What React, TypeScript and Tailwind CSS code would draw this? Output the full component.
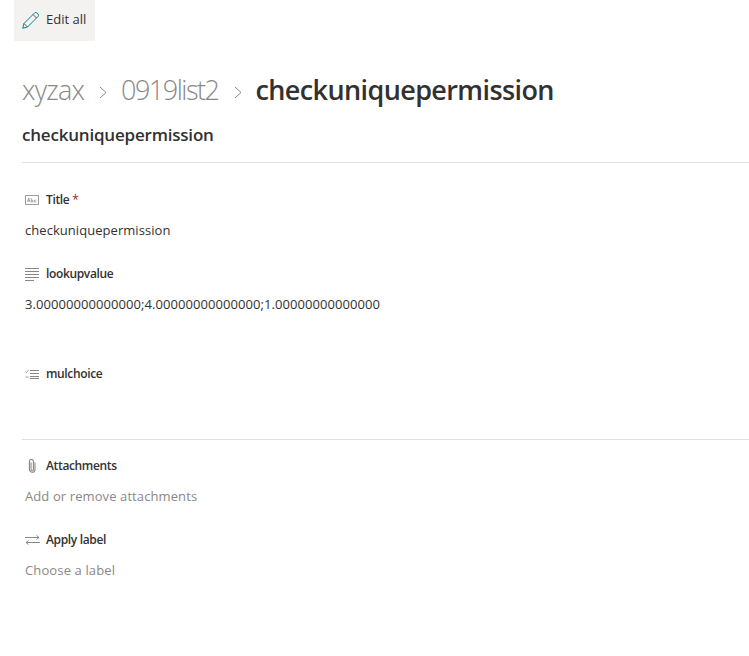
import type { ReactNode } from 'react';

function FieldLabel({ icon, children }: { icon: ReactNode; children: ReactNode }) {
  return (
    <div className="flex h-[16px] items-center">
      <div className="flex w-[24px] shrink-0 justify-start">{icon}</div>
      <div className="text-[12px] font-semibold tracking-[-0.35px] text-[#323130]">{children}</div>
    </div>
  );
}

function EditIcon() {
  return (
    <svg width="17" height="17" viewBox="0 0 17 17">
      <path d="M0.7 16.3l1.3-4.8L12.6 0.9a1.6 1.6 0 0 1 2.3 0l1.2 1.2a1.6 1.6 0 0 1 0 2.3L5.5 15z" fill="none" stroke="#038387" />
      <path d="M2 11.5L5.5 15M11 2.5l3.5 3.5" fill="none" stroke="#323130" strokeWidth="0.8" />
    </svg>
  );
}

function TextIcon() {
  return (
    <svg width="14" height="10" viewBox="0 0 14 10" className="ml-[3px]">
      <rect x="0.5" y="0.5" width="13" height="9" fill="none" stroke="#a19f9d" />
      <path d="M2.5 7l1.2-4L4.9 7M3 5.7h1.5M6.2 3v4M6.2 5.2h1.6v1.8H6.2M11.2 5.2H9.4v1.8h1.8" fill="none" stroke="#8a8886" strokeWidth="0.7" />
    </svg>
  );
}

function LinesIcon() {
  return (
    <svg width="14" height="13" viewBox="0 0 14 13" className="ml-[3px]">
      <path d="M0 0.5h14M0 3.5h14M0 6.5h14M0 9.5h14M0 12.5h9" stroke="#8a8886" fill="none" />
    </svg>
  );
}

function ChoiceIcon() {
  return (
    <svg width="14" height="10" viewBox="0 0 14 10" className="ml-[3px]">
      <path d="M5 1.5h9M5 4.5h9M5 7.5h9M5 9.5h9" stroke="#8a8886" fill="none" />
      <path d="M0.5 2.5l1 1 2-2.5M0.5 8h3" stroke="#a19f9d" fill="none" />
    </svg>
  );
}

function ClipIcon() {
  return (
    <svg width="8" height="14" viewBox="0 0 8 14" className="ml-[6px]">
      <path d="M3 3.5v7a1.2 1.2 0 0 0 2.4 0V2.5a2 2 0 0 0-4 0v8a2.8 2.8 0 0 0 5.6 0V3.5" fill="none" stroke="#8a8886" strokeWidth="1.1" />
    </svg>
  );
}

function LabelIcon() {
  return (
    <svg width="15" height="10" viewBox="0 0 15 10" className="ml-[3px]">
      <path d="M0 2.5h14M11.5 0.5l2.5 2-2.5 2M15 7.5H1M3.5 5.5l-2.5 2 2.5 2" fill="none" stroke="#8a8886" />
    </svg>
  );
}

function Chevron() {
  return (
    <svg width="8" height="13" viewBox="0 0 8 13" className="mt-[4px]">
      <path d="M1 1l6 5.5-6 5.5" fill="none" stroke="#8a8886" />
    </svg>
  );
}

export default function App() {
  return (
    <div className="h-[656px] w-[749px] overflow-hidden bg-white font-['Open_Sans','Noto_Sans',sans-serif] text-[#323130]">
      <div className="pl-[14px]">
        <button className="flex h-[41px] w-[81px] items-center gap-[7px] bg-[#f3f2f1] pb-[1px] pl-[8px] text-[13px] text-[#323130]">
          <EditIcon />
          Edit all
        </button>
      </div>

      <div className="mt-[29px] flex h-[40px] items-center pl-[22px] text-[27px]">
        <span className="font-light tracking-[-0.8px] text-[#8a8886]">xyzax</span>
        <span className="ml-[15px] mr-[14px]"><Chevron /></span>
        <span className="font-light tracking-[-1.5px] text-[#8a8886]">0919list2</span>
        <span className="ml-[16px] mr-[13px]"><Chevron /></span>
        <span className="font-semibold tracking-[-0.6px] text-[#323130]">checkuniquepermission</span>
      </div>

      <div className="mt-[13px] pl-[22px] text-[17px] font-semibold leading-[24px] tracking-[-0.2px]">checkuniquepermission</div>

      <div className="ml-[22px] mt-[15px] border-t border-[#e1dfdd]" />

      <div className="mt-[29px] pl-[22px]">
        <FieldLabel icon={<TextIcon />}>
          Title <span className="font-normal text-[#a4262c]">*</span>
        </FieldLabel>
        <div className="mt-[12px] pl-[3px] text-[13px] leading-[20px] tracking-[0.05px]">checkuniquepermission</div>

        <div className="mt-[26px]">
          <FieldLabel icon={<LinesIcon />}>lookupvalue</FieldLabel>
        </div>
        <div className="mt-[12px] pl-[3px] text-[13px] leading-[20px] tracking-[0.07px]">
          3.00000000000000;4.00000000000000;1.00000000000000
        </div>

        <div className="mt-[52px]">
          <FieldLabel icon={<ChoiceIcon />}>mulchoice</FieldLabel>
        </div>
      </div>

      <div className="ml-[22px] mt-[57px] border-t border-[#e1dfdd]" />

      <div className="mt-[18px] pl-[22px]">
        <FieldLabel icon={<ClipIcon />}>Attachments</FieldLabel>
        <div className="mt-[12px] pl-[3px] text-[13px] leading-[20px] tracking-[0.1px] text-[#8a8886]">Add or remove attachments</div>

        <div className="mt-[26px]">
          <FieldLabel icon={<LabelIcon />}>Apply label</FieldLabel>
        </div>
        <div className="mt-[12px] pl-[3px] text-[13px] leading-[20px] tracking-[0.13px] text-[#8a8886]">Choose a label</div>
      </div>
    </div>
  );
}
